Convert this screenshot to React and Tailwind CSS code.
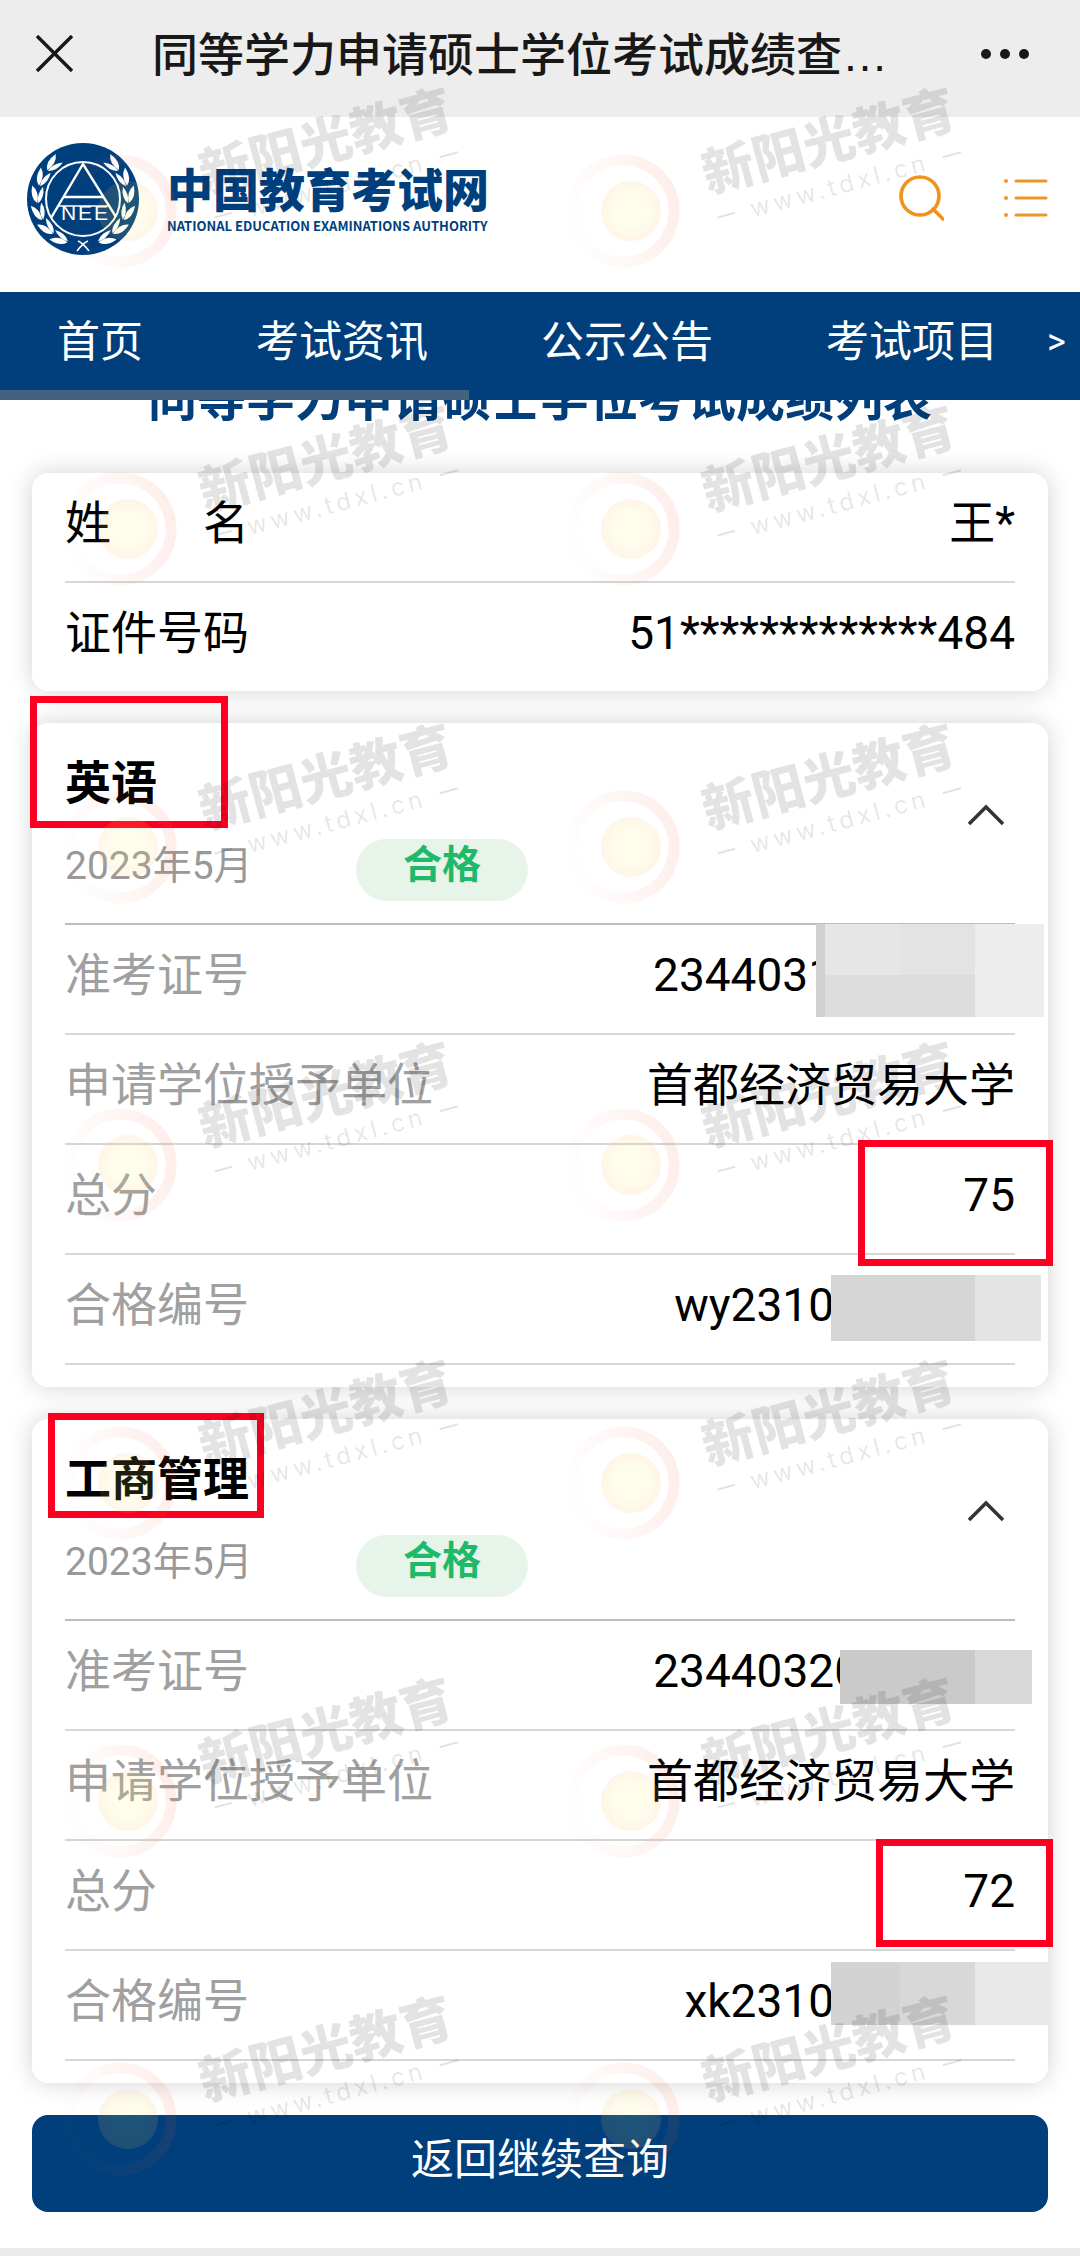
const NAV_ITEMS = ["首页", "考试资讯", "公示公告", "考试项目"];

const SUBJECTS = [
  {
    name: "英语",
    date: "2023年5月",
    status: "合格",
    mark: "-left-[35px] -top-[27px] h-[132px] w-[198px]",
    rows: [
      { label: "准考证号", value: "2344031", pad: "pr-[181px]", mask: "ticketA" },
      { label: "申请学位授予单位", value: "首都经济贸易大学" },
      { label: "总分", value: "75", mark: "-right-[38px] -top-[5px] h-[126px] w-[195px]" },
      { label: "合格编号", value: "wy2310", pad: "pr-[181px]", mask: "certA" },
    ],
  },
  {
    name: "工商管理",
    date: "2023年5月",
    status: "合格",
    mark: "-left-[17px] -top-[6px] h-[105px] w-[216px]",
    rows: [
      { label: "准考证号", value: "23440320", pad: "pr-[155px]", mask: "ticketB" },
      { label: "申请学位授予单位", value: "首都经济贸易大学" },
      { label: "总分", value: "72", mark: "-right-[38px] -top-[2px] h-[108px] w-[177px]" },
      { label: "合格编号", value: "xk2310", pad: "pr-[181px]", mask: "certB" },
    ],
  },
];

// Blocks that hide the tail of a private number
const MASKS = {
  ticketA: {
    box: "-top-[1px] -right-[29px] h-[93px] w-[228px] grid-cols-[9px_75px_75px_1fr] grid-rows-[51px_1fr]",
    cells: [
      "bg-[#d0d0d0] row-span-2",
      "bg-[#e6e6e6]",
      "bg-[#e3e3e3]",
      "bg-[#ededed] row-span-2",
      "bg-[#dddddd]",
      "bg-[#dcdcdc]",
    ],
  },
  certA: {
    box: "top-5 -right-[26px] h-[66px] w-[210px] grid-cols-[144px_1fr]",
    cells: ["bg-[#d5d5d5]", "bg-[#e4e4e4]"],
  },
  ticketB: {
    box: "top-[29px] -right-[17px] h-[54px] w-[192px] grid-cols-[135px_1fr]",
    cells: ["bg-[#cacaca]", "bg-[#d9d9d9]"],
  },
  certB: {
    box: "top-[11px] -right-[35px] h-[63px] w-[219px] grid-cols-[69px_75px_1fr]",
    cells: ["bg-[#d3d3d3]", "bg-[#d8d8d8]", "bg-[#e8e8e8]"],
  },
};

function Mask({ name }) {
  const mask = MASKS[name];
  return (
    <span className={`absolute grid ${mask.box}`} aria-hidden="true">
      {mask.cells.map((cell, i) => (
        <span key={i} className={cell} />
      ))}
    </span>
  );
}

function Mark({ className }) {
  return (
    <span
      className={`pointer-events-none absolute border-[7px] border-[#fd0021] ${className}`}
      aria-hidden="true"
    />
  );
}

const LEAVES = [-40, -62, -84, -106, -128, -149];

function Emblem() {
  return (
    <svg className="size-28 shrink-0" viewBox="0 0 112 112" aria-hidden="true">
      <circle cx="56" cy="56" r="56" fill="#003f7d" />
      <circle cx="56" cy="56" r="37" fill="none" stroke="#fff" strokeWidth="2" />
      <g fill="none" stroke="#fff" strokeWidth="2.4">
        <path d="M24 75 L56 21 L89 74" />
        <path d="M36 54 H76" />
        <path d="M30 63 H82" strokeWidth="1.4" />
      </g>
      <text
        x="34 51 67"
        y="77"
        fill="#fff"
        className="font-['Liberation_Sans',sans-serif] text-[21px]"
      >
        NEE
      </text>
      {/* Laurel branches, the right one mirrors the left */}
      {[1, -1].map((side) => (
        <g key={side} transform={`translate(56 56) scale(${side} 1)`} fill="#fff">
          {LEAVES.map((angle) => (
            <g key={angle} transform={`rotate(${angle}) translate(0 -46)`}>
              <path d="M-9 1 Q-5 -7 8 -6 Q3 2 -9 1Z" />
              <path d="M-9 2 Q-1 -1 8 5 Q-2 8 -9 2Z" />
            </g>
          ))}
          <path d="M-5 42 Q0 44 6 52" fill="none" stroke="#fff" strokeWidth="1.6" />
        </g>
      ))}
    </svg>
  );
}

function WatermarkTile() {
  return (
    <svg className="h-[318px] w-[503px] overflow-visible" viewBox="0 0 503 318">
      <defs>
        <linearGradient id="wm-ring" x1="0" x2="1" y1="0.4" y2="0.2">
          <stop offset="0" stopColor="#f26a3d" stopOpacity="0.01" />
          <stop offset="1" stopColor="#f2552c" stopOpacity="0.1" />
        </linearGradient>
        <radialGradient id="wm-sun">
          <stop offset="0" stopColor="#f4fa60" stopOpacity="0.12" />
          <stop offset="0.5" stopColor="#f8f05a" stopOpacity="0.12" />
          <stop offset="1" stopColor="#fcb450" stopOpacity="0.13" />
        </radialGradient>
      </defs>
      <circle cx="120" cy="131" r="51" fill="none" stroke="url(#wm-ring)" strokeWidth="11" />
      <circle cx="128" cy="131" r="30" fill="url(#wm-sun)" />
      <g transform="translate(206 117) rotate(-15)" fill="#000" fillOpacity="0.11">
        <text
          x="0"
          y="-4"
          className="font-['Noto_Sans_CJK_SC',sans-serif] text-[52px] font-black"
        >
          新阳光教育
        </text>
        <text
          x="37"
          y="31"
          className="font-['Inter','Liberation_Sans',sans-serif] text-[24px] tracking-[4px]"
        >
          www.tdxl.cn
        </text>
        <path d="M3 21 H21 V23 H3Z M236 21 H255 V23 H236Z" />
      </g>
    </svg>
  );
}

function Watermark() {
  return (
    <div
      className="pointer-events-none absolute inset-0 z-30 overflow-hidden pt-20"
      aria-hidden="true"
    >
      <div className="grid grid-cols-[503px_503px]">
        {Array.from({ length: 14 }, (_, i) => (
          <WatermarkTile key={i} />
        ))}
      </div>
    </div>
  );
}

function Row({ row }) {
  return (
    <div className="relative flex h-[110px] items-center justify-between border-b-2 border-[#d6d6d6] pb-[7px]">
      <dt className="text-[#a0a0a0]">{row.label}</dt>
      <dd className={row.pad}>{row.value}</dd>
      {row.mask && <Mask name={row.mask} />}
      {row.mark && <Mark className={row.mark} />}
    </div>
  );
}

function SubjectCard({ subject }) {
  return (
    <section className="rounded-2xl bg-white px-[33px] pb-[22px] shadow-[0_0_24px_rgba(0,0,0,0.18)]">
      <div className="relative flex h-[202px] items-start justify-between border-b-2 border-[#bdbdbd]">
        <div className="flex flex-col gap-6 pt-7">
          <h2 className="text-[46px] font-bold leading-[64px]">{subject.name}</h2>
          <div className="flex items-center text-[39px]">
            <span className="w-[291px] pb-2 leading-[54px] text-[#999]">{subject.date}</span>
            <span className="h-[62px] w-[172px] rounded-full bg-[#e7f4e9] text-center leading-[52px] font-bold text-[#1fb96a]">
              {subject.status}
            </span>
          </div>
        </div>
        <button type="button" className="mt-[76px] mr-[7px] p-1" aria-label="收起">
          <svg className="h-6 w-9" viewBox="0 0 36 24" fill="none" stroke="#333" strokeWidth="3.5">
            <path d="M1 21 L18 4 L35 21" />
          </svg>
        </button>
        <Mark className={subject.mark} />
      </div>
      <dl>
        {subject.rows.map((row) => (
          <Row key={row.label} row={row} />
        ))}
      </dl>
    </section>
  );
}

export default function App() {
  return (
    <div className="relative overflow-hidden bg-white font-['Roboto','Noto_Sans_CJK_SC',sans-serif] text-black">
      {/* Browser title bar */}
      <header className="flex h-[117px] items-center bg-[#ededed] pb-[10px] text-[#181818]">
        <button type="button" className="ml-9" aria-label="关闭">
          <svg className="size-[37px]" viewBox="0 0 37 37" stroke="currentColor" strokeWidth="3.4">
            <path d="M1 1 L36 36 M36 1 L1 36" />
          </svg>
        </button>
        <p className="ml-[79px] flex-1 font-['Noto_Sans_CJK_SC',sans-serif] text-[46px] font-medium whitespace-nowrap">
          同等学力申请硕士学位考试成绩查
          <span className="font-['Liberation_Sans',sans-serif]">…</span>
        </p>
        <button type="button" className="mr-[50px]" aria-label="更多">
          <svg className="h-3 w-[50px]" viewBox="0 0 50 12" fill="currentColor">
            <circle cx="6" cy="6" r="5" />
            <circle cx="25" cy="6" r="5" />
            <circle cx="44" cy="6" r="5" />
          </svg>
        </button>
      </header>

      {/* Site brand */}
      <div className="flex h-[175px] items-center pb-[11px] pl-[27px]">
        <a href="#home" className="flex items-center gap-7 text-[#003f7d]">
          <Emblem />
          <span className="flex flex-col pt-1">
            <span className="font-['Noto_Sans_CJK_SC',sans-serif] text-[46px] font-black leading-[46px]">
              中国教育考试网
            </span>
            <span className="mt-1 font-['Noto_Sans_CJK_SC',sans-serif] text-[13px] font-bold leading-6 whitespace-nowrap">
              NATIONAL EDUCATION EXAMINATIONS AUTHORITY
            </span>
          </span>
        </a>
        <div className="ml-auto flex items-center gap-15 pr-8">
          <button type="button" aria-label="搜索">
            <svg className="size-12" viewBox="0 0 48 48" fill="none" stroke="#f0921e" strokeWidth="3.6">
              <circle cx="24" cy="21" r="19" />
              <path d="M37 34 L47 44" strokeLinecap="round" />
            </svg>
          </button>
          <button type="button" aria-label="菜单">
            <svg className="h-10 w-11" viewBox="0 0 44 40" fill="none" stroke="#f0952a" strokeLinecap="round">
              <path d="M12 2 H42 M12 19 H42 M12 36 H42" strokeWidth="3" />
              <path d="M2 2 h0.01 M2 19 h0.01 M2 36 h0.01" strokeWidth="4" />
            </svg>
          </button>
        </div>
      </div>

      <nav className="relative z-10 flex h-[108px] items-center gap-px bg-[#003f7c] pb-2 pl-px text-[43px] text-white">
        {NAV_ITEMS.map((item) => (
          <a key={item} href="#nav" className="px-14 whitespace-nowrap">
            {item}
          </a>
        ))}
        <a href="#more" className="-ml-2 text-[36px]">
          &gt;
        </a>
        <span className="absolute bottom-0 left-0 h-[10px] w-[469px] bg-[#44617f]" />
      </nav>

      <main className="px-8 pb-9">
        <h1 className="-mt-8 text-center text-[49px] font-bold leading-[64px] whitespace-nowrap text-[#003f7c]">
          同等学力申请硕士学位考试成绩列表
        </h1>

        <div className="mt-[41px] flex flex-col gap-8 text-[46px]">
          <dl className="rounded-2xl bg-white px-[33px] shadow-[0_0_24px_rgba(0,0,0,0.18)]">
            <div className="flex h-[110px] items-center justify-between border-b-2 border-[#d6d6d6] pb-[7px]">
              <dt className="whitespace-pre">姓　　名</dt>
              <dd>王*</dd>
            </div>
            <div className="flex h-[108px] items-center justify-between pb-[7px]">
              <dt>证件号码</dt>
              <dd>51*************484</dd>
            </div>
          </dl>

          {SUBJECTS.map((subject) => (
            <SubjectCard key={subject.name} subject={subject} />
          ))}

          <button
            type="button"
            className="h-[97px] rounded-2xl bg-[#003f7c] pb-[7px] text-[43px] text-white"
          >
            返回继续查询
          </button>
        </div>
      </main>

      <footer className="h-2 bg-[#ebebeb]" />

      <Watermark />
    </div>
  );
}
